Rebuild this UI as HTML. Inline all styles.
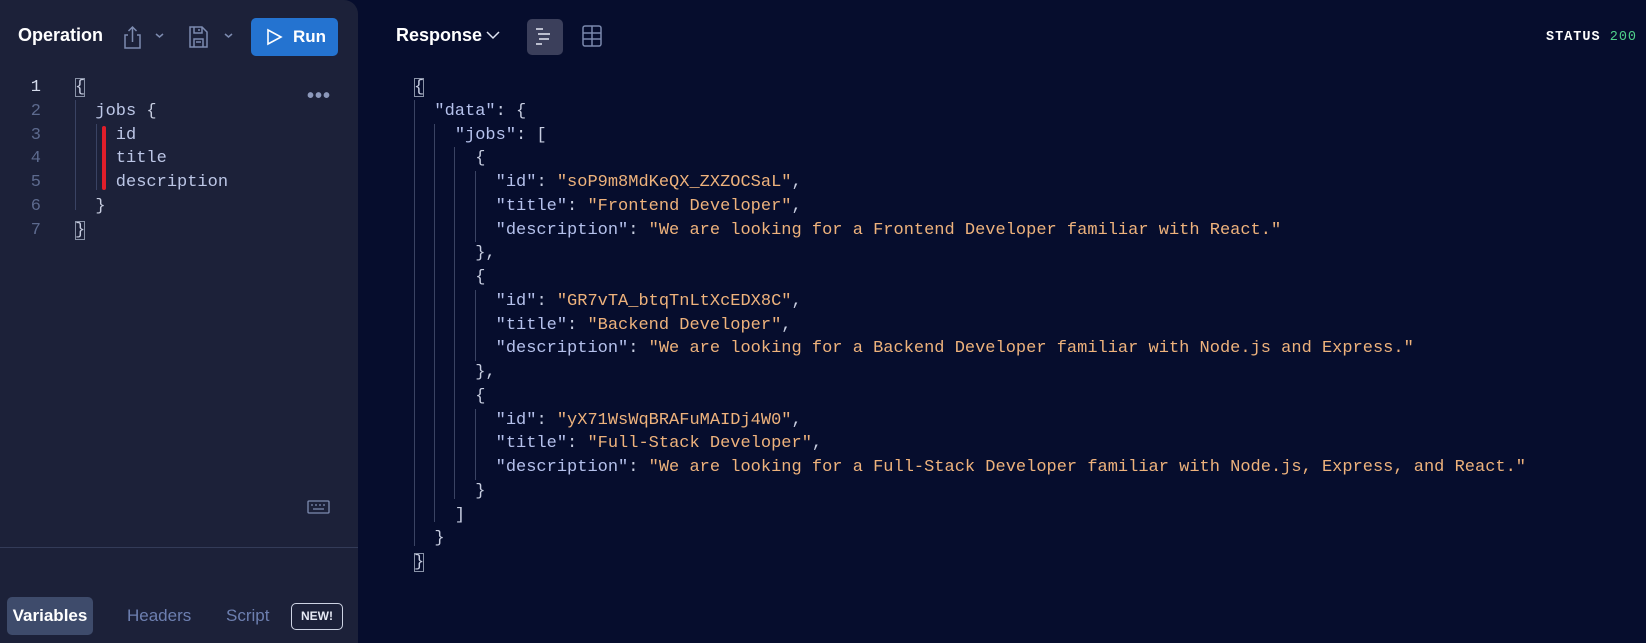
<!DOCTYPE html>
<html><head><meta charset="utf-8"><style>
*{margin:0;padding:0;box-sizing:border-box}
body{width:1646px;height:643px;background:#060d2d;font-family:"Liberation Sans",sans-serif;position:relative;overflow:hidden}
.left{position:absolute;left:0;top:0;width:358px;height:643px;background:#1c2139;border-top-right-radius:14px}
.abs{position:absolute}
.code{font-family:"Liberation Mono",monospace;font-size:17px;line-height:23.75px;white-space:pre;color:#bcc6e6}
.ln{color:#5d6a8e;text-align:right;width:12px}
.k{color:#b5c1ec}.s{color:#eeb27c}.p{color:#c7cde0}
.guide{position:absolute;width:1px;background:#3a4363}
.box{outline:1px solid #8a93a8;outline-offset:-1px}
</style></head><body>
<div class="left"></div>
<div class="abs" style="left:18px;top:25px;color:#fff;font-weight:bold;font-size:18px">Operation</div>
<svg class="abs" style="left:120px;top:24px" width="60" height="26" viewBox="0 0 60 26" fill="none" stroke="#7d8bb0" stroke-width="1.5"><path d="M8 11H5v13h15V11h-3M12.5 18V3M8.5 7l4-4 4 4"/><path d="M36 10l3.5 3 3.5-3"/></svg>
<svg class="abs" style="left:186px;top:24px" width="56" height="26" viewBox="0 0 56 26" fill="none" stroke="#7d8bb0" stroke-width="1.5"><path d="M4 3h12l5 5v15H4z"/><path d="M8 3v6h8V3M13 5v2M8 23v-8h9v8M10 18h5"/><path d="M39 10l3.5 3 3.5-3"/></svg>
<div class="abs" style="left:251px;top:18px;width:87px;height:38px;background:#2473d0;border-radius:5px;color:#fff;font-weight:bold;font-size:17px;line-height:38px"><svg style="position:absolute;left:14px;top:10px" width="18" height="18" viewBox="0 0 18 18" fill="none" stroke="#fff" stroke-width="1.6"><path d="M3 2l13 7-13 7z"/></svg><span style="position:absolute;left:42px">Run</span></div>
<div class="abs" style="left:396px;top:25px;color:#fff;font-weight:bold;font-size:18px">Response</div>
<svg class="abs" style="left:485px;top:28px" width="18" height="14" fill="none" stroke="#dfe4f2" stroke-width="1.5"><path d="M2 4l6 6 6-6"/></svg>
<div class="abs" style="left:527px;top:19px;width:36px;height:36px;background:#3b3f5b;border-radius:5px"></div>
<svg class="abs" style="left:527px;top:19px" width="36" height="36" stroke="#e6e9f4" stroke-width="1.5"><path d="M9 10h7M11 15h12M12 20h10M9 25h6"/></svg>
<svg class="abs" style="left:581px;top:25px" width="22" height="24" fill="none" stroke="#7a88ad" stroke-width="1.5"><rect x="2" y="1" width="18" height="20" rx="2"/><path d="M2 8h18M2 14h18M11 1v20"/></svg>
<div class="abs" style="left:1546px;top:30px;font-family:'Liberation Mono',monospace;font-size:13.5px;color:#fff;letter-spacing:1px;font-weight:bold">STATUS <span style="color:#4fd08a;font-weight:normal">200</span></div>

<div class="abs code" style="left:29px;top:76px"><div class="ln" style="color:#d5dbec">1</div><div class="ln">2</div><div class="ln">3</div><div class="ln">4</div><div class="ln">5</div><div class="ln">6</div><div class="ln">7</div></div>
<div class="guide" style="left:75px;top:100px;height:110px"></div>
<div class="guide" style="left:96px;top:124px;height:66px"></div>
<div class="abs" style="left:102px;top:126px;width:4px;height:64px;background:#e01e2a;border-radius:2px"></div>
<div class="abs code" style="left:75px;top:76px"><span class="box p">{</span>
  jobs <span class="p">{</span>
    id
    title
    description
  <span class="p">}</span>
<span class="box p">}</span></div>
<div class="abs" style="left:307px;top:85px;color:#8c98bb;font-size:20px;letter-spacing:1px;font-weight:bold">•••</div>
<svg class="abs" style="left:307px;top:500px" width="24" height="14" fill="none" stroke="#7d8bb0" stroke-width="1.3"><rect x="1" y="1" width="21" height="12" rx="1"/><path d="M4 5h2M8 5h2M12 5h2M16 5h2M6 9h11"/></svg>
<div class="abs" style="left:0;top:547px;width:358px;height:1px;background:#333b58"></div>
<div class="abs" style="left:7px;top:597px;width:86px;height:38px;background:#3e4b6b;border-radius:5px;color:#fff;font-weight:bold;font-size:17px;line-height:38px;text-align:center">Variables</div>
<div class="abs" style="left:127px;top:597px;color:#6d7fb0;font-size:17px;line-height:38px">Headers</div>
<div class="abs" style="left:226px;top:597px;color:#6d7fb0;font-size:17px;line-height:38px">Script</div>
<div class="abs" style="left:291px;top:603px;width:52px;height:27px;border:1.3px solid #cdd3e3;border-radius:5px;color:#e6e9f4;font-weight:bold;font-size:12px;line-height:25px;text-align:center">NEW!</div>

<div class="guide" style="left:414px;top:100px;height:446px"></div>
<div class="guide" style="left:434px;top:124px;height:398px"></div>
<div class="guide" style="left:454px;top:147px;height:352px"></div>
<div class="guide" style="left:475px;top:171px;height:71px"></div>
<div class="guide" style="left:475px;top:290px;height:71px"></div>
<div class="guide" style="left:475px;top:409px;height:71px"></div>
<div class="abs code" style="left:414px;top:76px"><span class="box p">{</span>
  <span class="k">"data"</span><span class="p">: {</span>
    <span class="k">"jobs"</span><span class="p">: [</span>
      <span class="p">{</span>
        <span class="k">"id"</span><span class="p">: </span><span class="s">"soP9m8MdKeQX_ZXZOCSaL"</span><span class="p">,</span>
        <span class="k">"title"</span><span class="p">: </span><span class="s">"Frontend Developer"</span><span class="p">,</span>
        <span class="k">"description"</span><span class="p">: </span><span class="s">"We are looking for a Frontend Developer familiar with React."</span>
      <span class="p">},</span>
      <span class="p">{</span>
        <span class="k">"id"</span><span class="p">: </span><span class="s">"GR7vTA_btqTnLtXcEDX8C"</span><span class="p">,</span>
        <span class="k">"title"</span><span class="p">: </span><span class="s">"Backend Developer"</span><span class="p">,</span>
        <span class="k">"description"</span><span class="p">: </span><span class="s">"We are looking for a Backend Developer familiar with Node.js and Express."</span>
      <span class="p">},</span>
      <span class="p">{</span>
        <span class="k">"id"</span><span class="p">: </span><span class="s">"yX71WsWqBRAFuMAIDj4W0"</span><span class="p">,</span>
        <span class="k">"title"</span><span class="p">: </span><span class="s">"Full-Stack Developer"</span><span class="p">,</span>
        <span class="k">"description"</span><span class="p">: </span><span class="s">"We are looking for a Full-Stack Developer familiar with Node.js, Express, and React."</span>
      <span class="p">}</span>
    <span class="p">]</span>
  <span class="p">}</span>
<span class="box p">}</span></div>
</body></html>
